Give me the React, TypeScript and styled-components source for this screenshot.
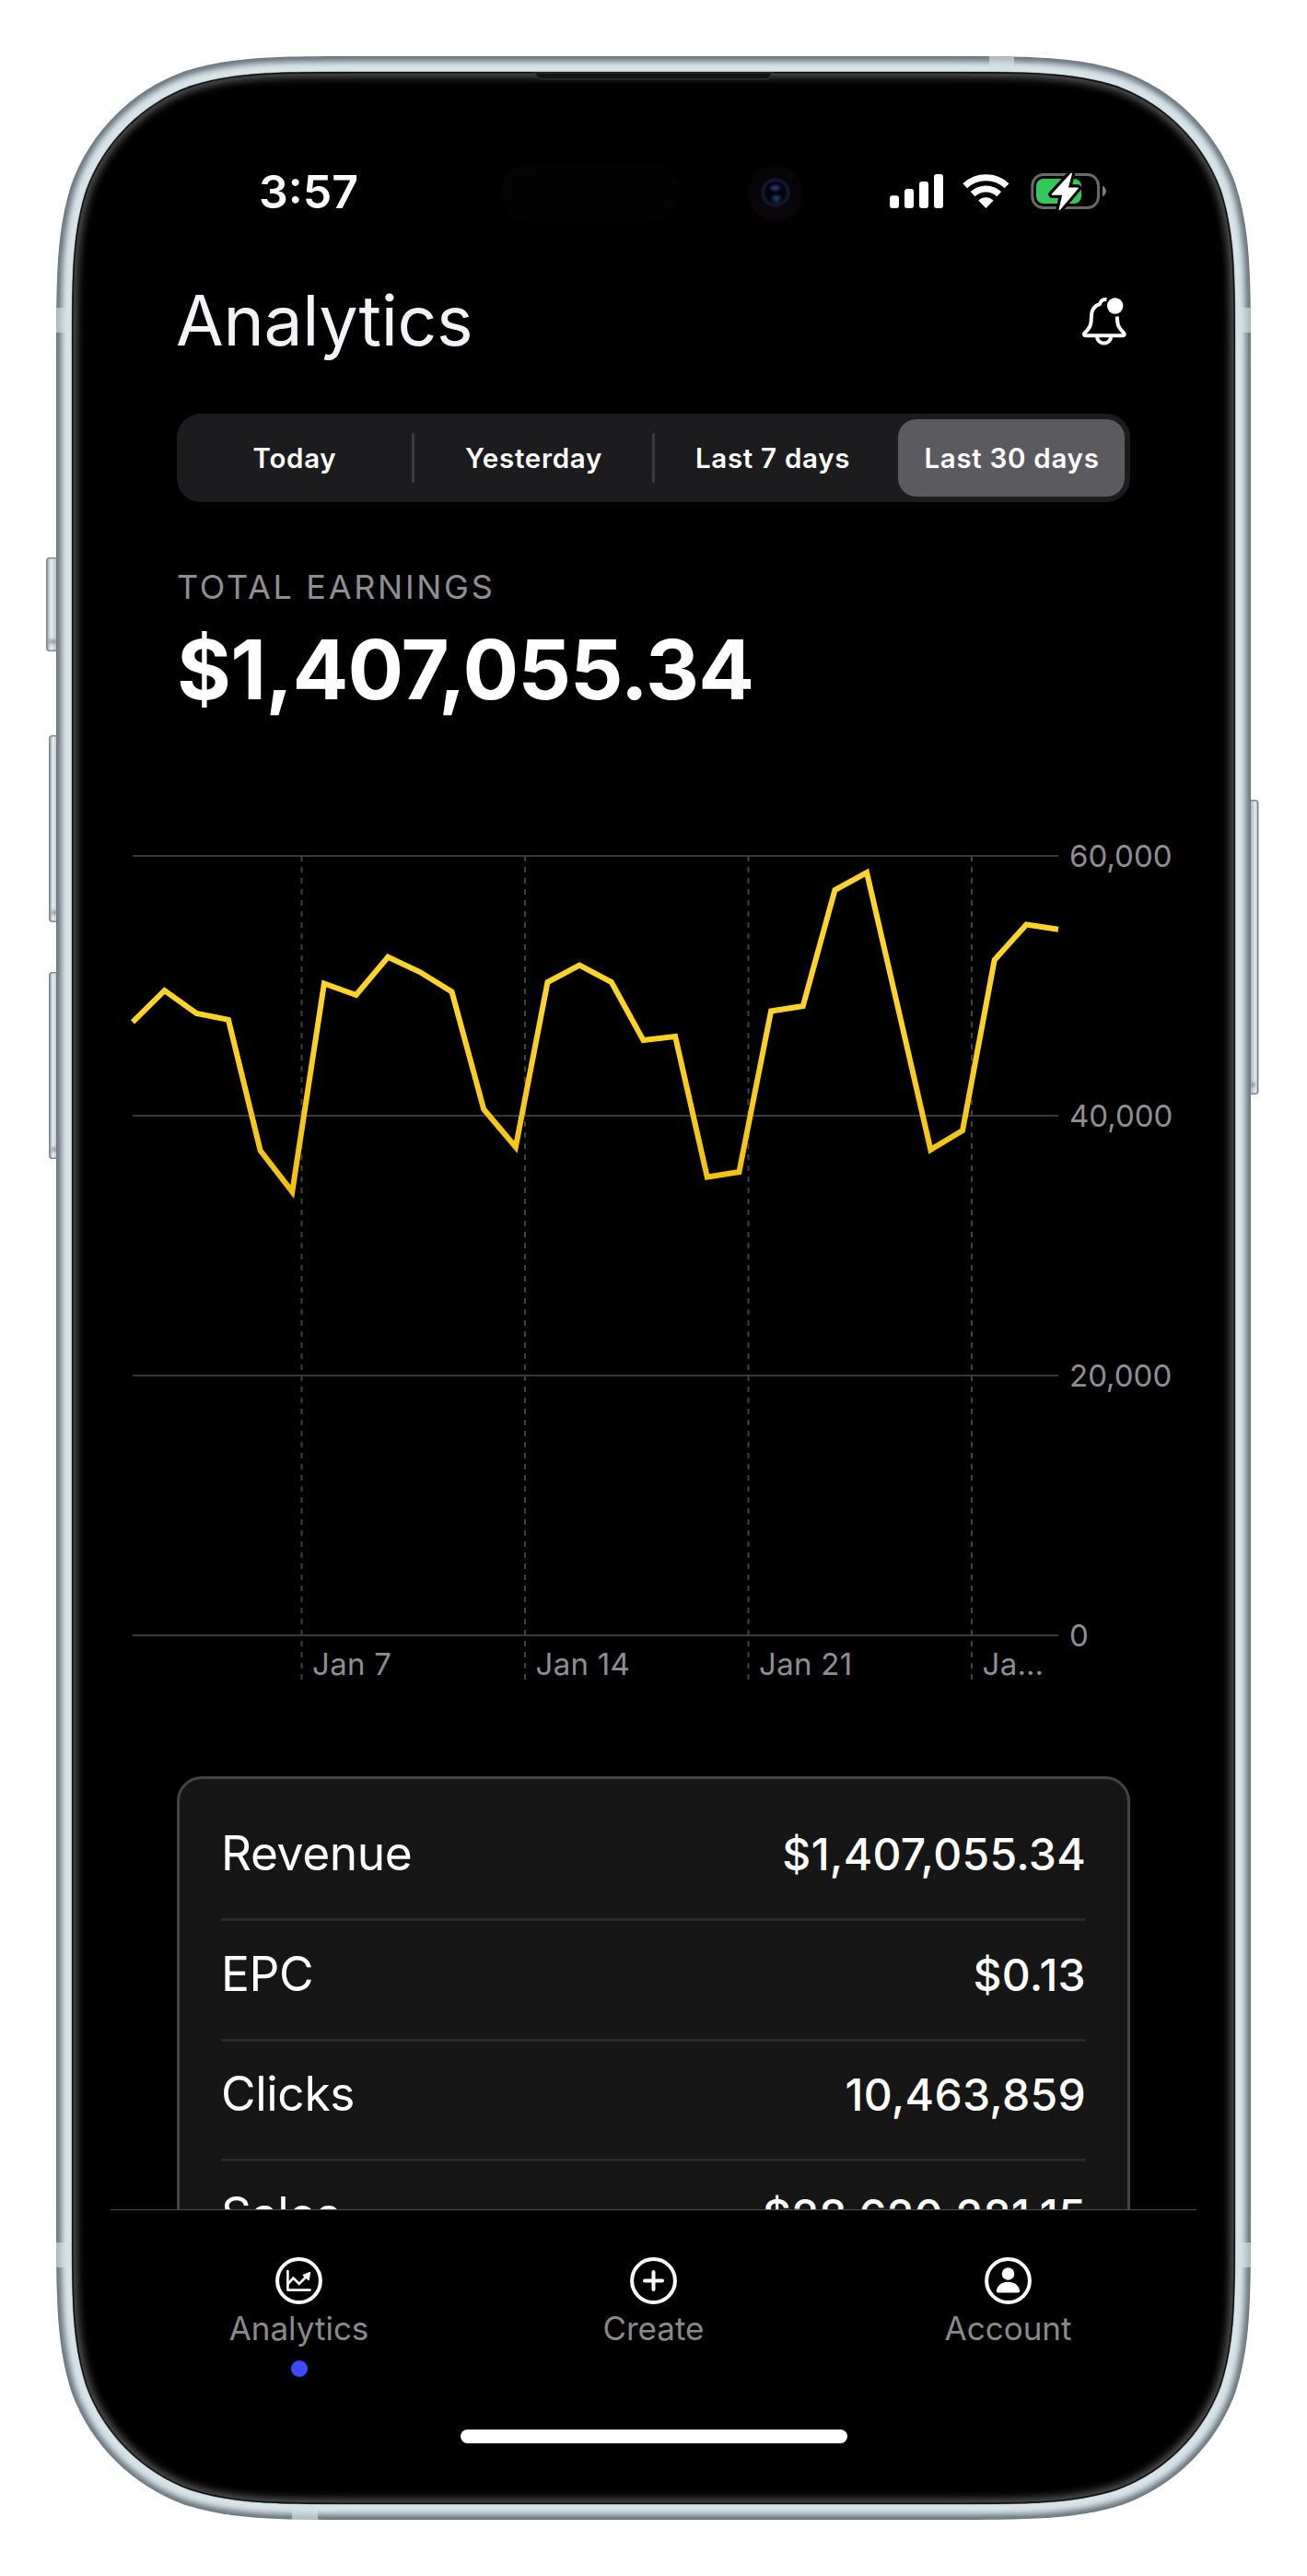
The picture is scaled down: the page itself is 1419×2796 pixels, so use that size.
import React from "react";
import styled, { createGlobalStyle } from "styled-components";

const GlobalStyle = createGlobalStyle`
  body {
    margin: 0;
    background: #ffffff;
    font-family: Inter, "Liberation Sans", sans-serif;
  }
`;

const Page = styled.main`
  position: relative;
  box-sizing: border-box;
  width: 1419px;
  height: 2796px;
  padding: 120px;
`;

const ShellSvg = styled.svg`
  position: absolute;
  top: 0;
  left: 0;
`;

const Screen = styled.div`
  position: relative;
  display: flex;
  flex-direction: column;
  width: 1179px;
  height: 2556px;
  color: #ffffff;
`;

const StatusBar = styled.div`
  display: flex;
  flex: none;
  justify-content: space-between;
  box-sizing: border-box;
  height: 177px;
  padding: 58px 97px 0 161px;
`;

const Time = styled.span`
  font-size: 50px;
  font-weight: 600;
  line-height: 60px;
`;

const StatusIcons = styled.div`
  display: flex;
  gap: 21px;
  margin-top: 9px;
`;

const Scroll = styled.div`
  flex: 1;
  min-height: 0;
  overflow: hidden;
`;

const Header = styled.header`
  display: flex;
  justify-content: space-between;
  align-items: flex-start;
  height: 90px;
  padding: 5px 75px 0 71px;
`;

const Title = styled.h1`
  margin: 1px 0 0;
  color: #f2f2f7;
  font-size: 75px;
  font-weight: 430;
  line-height: 90px;
  letter-spacing: -0.3px;
`;

const BellButton = styled.button`
  display: flex;
  margin: 20px 0 0;
  padding: 0;
  border: 0;
  background: none;
`;

const Segments = styled.div`
  display: flex;
  align-items: center;
  box-sizing: border-box;
  height: 96px;
  margin: 57px 72px 0;
  border-radius: 26px;
  background: #1c1c1e;
`;

const Segment = styled.button<{ $width: number; $active?: boolean }>`
  width: ${(props) => props.$width}px;
  height: 84px;
  margin: 0 0 0 ${(props) => (props.$active ? 9 : 0)}px;
  padding: 0 0 0 1px;
  border: 0;
  border-radius: 20px;
  background: ${(props) => (props.$active ? "#5b5a5f" : "transparent")};
  color: #ffffff;
  font-family: inherit;
  font-size: 29.5px;
  font-weight: 600;
  letter-spacing: 0.7px;
  white-space: nowrap;
`;

const SegmentDivider = styled.span`
  width: 3px;
  height: 54px;
  border-radius: 2px;
  background: #3d3d40;
`;

const Summary = styled.section`
  padding: 70px 72px 0;
`;

const SummaryLabel = styled.div`
  color: #8e8e93;
  font-size: 36px;
  line-height: 44px;
  letter-spacing: 2.7px;
`;

const SummaryValue = styled.div`
  margin: 13px 0 -1px;
  font-size: 90px;
  font-weight: 700;
  line-height: 110px;
  letter-spacing: -0.8px;
`;

const ChartSvg = styled.svg`
  display: block;
  margin-top: 129px;

  text {
    fill: #8e8e93;
    font-size: 33px;
  }
`;

const Card = styled.section`
  box-sizing: border-box;
  margin: 98px 72px 0;
  padding: 23.4px 45px;
  border: 3px solid #444446;
  border-radius: 27px;
  background: #161616;
`;

const StatRow = styled.div`
  display: flex;
  justify-content: space-between;
  align-items: baseline;
  box-sizing: border-box;
  height: 130.6px;
  padding-top: 18.8px;
  border-bottom: 3px solid #2a2a2b;
`;

const StatLabel = styled.span`
  font-size: 51.5px;
  font-weight: 430;
  line-height: 76px;
  letter-spacing: -0.4px;
`;

const StatValue = styled.span`
  font-size: 48px;
  font-weight: 500;
  line-height: 76px;
  letter-spacing: 0.3px;
`;

const TabBar = styled.nav`
  display: flex;
  flex: none;
  flex-direction: column;
  align-items: center;
  box-sizing: border-box;
  height: 278px;
  border-top: 1px solid #4c4c4e;
`;

const Tabs = styled.div`
  display: grid;
  grid-template-columns: repeat(3, 385px);
  padding-top: 51px;
`;

const Tab = styled.a`
  display: flex;
  flex-direction: column;
  align-items: center;
`;

const TabLabel = styled.span`
  margin-top: 5px;
  color: #8a8a8a;
  font-size: 35px;
  line-height: 42px;
`;

const ActiveDot = styled.span`
  width: 18px;
  height: 18px;
  margin-top: 14px;
  border-radius: 50%;
  background: #3d4bff;
`;

const HomeIndicator = styled.div`
  width: 420px;
  height: 15px;
  margin: auto 0 24px;
  border-radius: 8px;
  background: #ffffff;
`;

// Rounded rectangle with the smooth corners of the device body
const smoothRect = (
  x: number,
  y: number,
  w: number,
  h: number,
  r: number
): string => {
  const corner = (
    cx: number,
    cy: number,
    ux: number,
    uy: number,
    vx: number,
    vy: number
  ) => {
    // a runs back along the incoming edge, b runs along the outgoing edge
    const p = (a: number, b: number) =>
      `${cx - ux * a * r + vx * b * r} ${cy - uy * a * r + vy * b * r}`;
    return [
      `L ${p(1.5287, 0)}`,
      `C ${p(1.0885, 0)} ${p(0.8684, 0)} ${p(0.6315, 0.0749)}`,
      `C ${p(0.3728, 0.1691)} ${p(0.1691, 0.3728)} ${p(0.0749, 0.6315)}`,
      `C ${p(0, 0.8684)} ${p(0, 1.0885)} ${p(0, 1.5287)}`,
    ].join(" ");
  };
  return [
    `M ${x + w / 2} ${y}`,
    corner(x + w, y, 1, 0, 0, 1),
    corner(x + w, y + h, 0, 1, -1, 0),
    corner(x, y + h, -1, 0, 0, -1),
    corner(x, y, 0, -1, 1, 0),
    "Z",
  ].join(" ");
};

const body = smoothRect(61, 61, 1297, 2674, 220);
const glass = smoothRect(78, 78, 1263, 2640, 204);

const SideButton = ({
  x,
  y,
  width,
  height,
  flip,
}: {
  x: number;
  y: number;
  width: number;
  height: number;
  flip?: boolean;
}) => (
  <g>
    <rect
      x={x + 0.75}
      y={y + 0.75}
      width={width + 3}
      height={height - 1.5}
      rx={3}
      fill={flip ? "url(#buttonRight)" : "url(#buttonLeft)"}
      stroke="#7f8a90"
      strokeWidth={1.5}
    />
    <rect
      x={x + 3}
      y={y + height - 13}
      width={width - 2}
      height={5}
      fill="#6f7a80"
      opacity={0.6}
      filter="url(#soft)"
    />
  </g>
);

const Shell = () => (
  <ShellSvg width="1419" height="2796" viewBox="0 0 1419 2796">
    <defs>
      <linearGradient id="buttonLeft">
        <stop offset="0" stopColor="#9ba6ac" />
        <stop offset="0.35" stopColor="#e6edf1" />
        <stop offset="1" stopColor="#9eabb1" />
      </linearGradient>
      <linearGradient id="buttonRight">
        <stop offset="0.2" stopColor="#9eabb1" />
        <stop offset="0.75" stopColor="#e6edf1" />
        <stop offset="1" stopColor="#9ba6ac" />
      </linearGradient>
      <linearGradient id="camera" x1="0" y1="0" x2="0" y2="1">
        <stop offset="0" stopColor="#040405" />
        <stop offset="1" stopColor="#0b050b" />
      </linearGradient>
      <filter id="soft" x="-50%" y="-50%" width="200%" height="200%">
        <feGaussianBlur stdDeviation="1.6" />
      </filter>
      <filter
        id="rim"
        filterUnits="userSpaceOnUse"
        x="0"
        y="0"
        width="1419"
        height="2796"
      >
        <feGaussianBlur stdDeviation="3.2" />
      </filter>
      <filter
        id="glow"
        filterUnits="userSpaceOnUse"
        x="0"
        y="0"
        width="1419"
        height="2796"
      >
        <feGaussianBlur stdDeviation="4.5" />
      </filter>
      <clipPath id="bodyClip">
        <path d={body} />
      </clipPath>
      <clipPath id="glassClip">
        <path d={glass} />
      </clipPath>
    </defs>

    <SideButton x={50} y={605} width={11} height={102} />
    <SideButton x={53} y={798} width={8} height={203} />
    <SideButton x={53} y={1055} width={8} height={203} />
    <SideButton x={1354} y={868} width={8} height={320} flip />

    <g clipPath="url(#bodyClip)">
      <path d={body} fill="#d8e3e8" />
      <path
        d={body}
        fill="none"
        stroke="#66727a"
        strokeWidth="11"
        filter="url(#rim)"
      />
      <g fill="#d6e0e1" opacity="0.65">
        <rect x="61" y="334" width="18" height="27" />
        <rect x="1340" y="334" width="18" height="27" />
        <rect x="61" y="2434" width="18" height="27" />
        <rect x="1340" y="2434" width="18" height="27" />
        <rect x="1074" y="61" width="27" height="18" />
        <rect x="317" y="2717" width="28" height="18" />
      </g>
    </g>
    <path d={glass} fill="#000000" stroke="#a3afb5" strokeWidth="1.5" />
    <g clipPath="url(#glassClip)">
      <path
        d={glass}
        fill="none"
        stroke="#565454"
        strokeWidth="11"
        filter="url(#glow)"
      />
      <path d={glass} fill="none" stroke="#101314" strokeWidth="3" />
    </g>

    <path
      d="M579 79 H840 C836 79 837 86 831 86 H588 C582 86 583 79 579 79 Z"
      fill="#131313"
      stroke="#3a3a3a"
      strokeWidth="1"
    />
    <rect x="544" y="176" width="194" height="66" rx="33" fill="#030303" />
    <circle cx="842" cy="209" r="30" fill="url(#camera)" />
    <circle cx="842" cy="209" r="16" fill="#12142a" />
    <circle cx="842" cy="209" r="11.5" fill="#04040f" />
    <ellipse cx="841.5" cy="204" rx="5" ry="3" fill="#36458f" opacity="0.8" filter="url(#soft)" />
    <ellipse cx="843" cy="215" rx="4.5" ry="3" fill="#1b6d7c" opacity="0.6" filter="url(#soft)" />
    <ellipse cx="843" cy="219" rx="3.5" ry="1.5" fill="#5a1f8f" opacity="0.8" filter="url(#soft)" />
  </ShellSvg>
);

const SignalIcon = () => (
  <svg width="58" height="42" viewBox="0 0 58 42" fill="#ffffff">
    <rect x="0" y="25.3" width="10" height="13.7" rx="3" />
    <rect x="16" y="18" width="10" height="21" rx="3" />
    <rect x="32" y="10" width="10" height="29" rx="3" />
    <rect x="48" y="2" width="10" height="37" rx="3" />
  </svg>
);

const WifiIcon = () => (
  <svg width="52" height="42" viewBox="0 0 52 42" fill="none">
    <g stroke="#ffffff" strokeWidth="7">
      <path d="M2.7 14.7 A33.3 33.3 0 0 1 48.1 14.7" />
      <path d="M11.1 23.6 A21 21 0 0 1 39.7 23.6" />
    </g>
    <path d="M25.4 39 L17.2 30.6 A11.7 11.7 0 0 1 33.6 30.6 Z" fill="#ffffff" />
  </svg>
);

const BatteryIcon = () => {
  const bolt = "M45.2 1.5 L24.4 24 H36.2 L32.4 40.2 L52 17.2 H41 Z";
  return (
    <svg width="84" height="42" viewBox="0 0 84 42" fill="none">
      <rect
        x="2.8"
        y="2.5"
        width="71.7"
        height="36"
        rx="12"
        stroke="#69696a"
        strokeWidth="3"
      />
      <path d="M79 14.7 C84.2 17 84.2 24 79 26.3 Z" fill="#7d7d7e" />
      <rect x="7" y="7" width="49" height="27" rx="8" fill="#34c759" />
      <path d={bolt} stroke="#000000" strokeWidth="8" strokeLinejoin="round" />
      <path
        d={bolt}
        fill="#ffffff"
        stroke="#ffffff"
        strokeWidth="1.6"
        strokeLinejoin="round"
      />
    </svg>
  );
};

const BellIcon = () => (
  <svg width="50" height="54" viewBox="0 0 50 54" fill="none">
    <g stroke="#ffffff" strokeWidth="4" strokeLinejoin="round">
      <path d="M27.5 3 C24 2.5 20.8 4.6 20 8 C14.5 9.8 11.4 14 11 20 L10.6 27 C10.3 31.5 9 33.7 6.6 36.3 L3.6 39.3 C2.4 40.8 2.9 42.3 4.8 42.3 H44.8 C46.9 42.3 47.3 40.8 46 39.3 C42 35 40 33 39.5 29 L38.7 21.5" />
      <path d="M17 43 C17 47.2 20.3 50.5 24.6 50.5 S32.2 47.2 32.2 43" />
    </g>
    <circle cx="36.7" cy="10" r="8.7" fill="#ffffff" />
  </svg>
);

const AnalyticsIcon = () => (
  <svg width="51" height="51" viewBox="0 0 51 51" fill="none">
    <circle cx="25.5" cy="25.5" r="23.4" stroke="#ffffff" strokeWidth="4" />
    <g stroke="#ffffff" strokeWidth="2.6" strokeLinecap="round">
      <path d="M13.4 15 V35.6 H37.6" strokeLinejoin="round" />
      <path d="M14.2 28.4 L19.4 22.6 L25.8 28.8 L34 20.5" />
    </g>
    <path
      d="M37.4 16.8 L30.4 19.4 L36 24.4 Z"
      fill="#ffffff"
      stroke="#ffffff"
      strokeWidth="1.6"
      strokeLinejoin="round"
    />
  </svg>
);

const CreateIcon = () => (
  <svg width="51" height="51" viewBox="0 0 51 51" fill="none">
    <g stroke="#ffffff" strokeWidth="4" strokeLinecap="round">
      <circle cx="25.5" cy="25.5" r="23.4" />
      <path d="M25.5 16 V35 M16 25.5 H35" />
    </g>
  </svg>
);

const AccountIcon = () => (
  <svg width="51" height="51" viewBox="0 0 51 51" fill="none">
    <circle cx="25.5" cy="25.5" r="23.4" stroke="#ffffff" strokeWidth="4" />
    <circle cx="25.5" cy="18" r="6.8" fill="#ffffff" />
    <path
      d="M12.8 36.4 C13.6 31 18.5 26.8 25.5 26.8 S37.4 31 38.2 36.4 Q38.4 38.5 36.4 38.5 H14.6 Q12.6 38.5 12.8 36.4 Z"
      fill="#ffffff"
    />
  </svg>
);

const earnings = [
  47210, 49640, 47870, 47390, 37320, 34140, 50180, 49290, 52220, 51060, 49540,
  40500, 37590, 50280, 51590, 50280, 45810, 46100, 35280, 35670, 48050, 48440,
  57370, 58720, 48080, 37380, 38860, 51990, 54720, 54350,
];

const yTicks = [60000, 40000, 20000, 0];

const xTicks = [
  { x: 207.5, label: "Jan 7" },
  { x: 450, label: "Jan 14" },
  { x: 692.5, label: "Jan 21" },
  { x: 935, label: "Ja…" },
];

const plot = { left: 24, right: 1029, top: 19, bottom: 865 };

const scaleX = (i: number) =>
  plot.left + ((plot.right - plot.left) * i) / (earnings.length - 1);
const scaleY = (value: number) =>
  plot.bottom - ((plot.bottom - plot.top) * value) / 60000;

const EarningsChart = () => (
  <ChartSvg width="1179" height="920" viewBox="0 0 1179 920">
    <defs>
      <linearGradient
        id="line"
        gradientUnits="userSpaceOnUse"
        x1="0"
        y1="180"
        x2="0"
        y2="385"
      >
        <stop offset="0" stopColor="#ffd42a" />
        <stop offset="1" stopColor="#f0c10e" />
      </linearGradient>
    </defs>
    {yTicks.map((tick) => (
      <g key={tick}>
        <path
          d={`M${plot.left} ${scaleY(tick)} H${plot.right}`}
          stroke="#39393b"
          strokeWidth="2"
        />
        <text x="1041" y={scaleY(tick) + 12}>
          {tick.toLocaleString("en-US")}
        </text>
      </g>
    ))}
    {xTicks.map(({ x, label }) => (
      <g key={label}>
        <path
          d={`M${x} ${plot.top} V913`}
          stroke="#414143"
          strokeWidth="2"
          strokeDasharray="6 6"
        />
        <text x={x + 11.5} y="908" letterSpacing="0.3">
          {label}
        </text>
      </g>
    ))}
    <polyline
      points={earnings.map((v, i) => `${scaleX(i)},${scaleY(v)}`).join(" ")}
      fill="none"
      stroke="url(#line)"
      strokeWidth="6"
      strokeMiterlimit="10"
    />
  </ChartSvg>
);

const stats = [
  { label: "Revenue", value: "$1,407,055.34" },
  { label: "EPC", value: "$0.13" },
  { label: "Clicks", value: "10,463,859" },
  { label: "Sales", value: "$28,620,281.15" },
];

const App = () => {
  return (
    <Page>
      <GlobalStyle />
      <Shell />
      <Screen>
        <StatusBar>
          <Time>3:57</Time>
          <StatusIcons>
            <SignalIcon />
            <WifiIcon />
            <BatteryIcon />
          </StatusIcons>
        </StatusBar>
        <Scroll>
          <Header>
            <Title>Analytics</Title>
            <BellButton aria-label="Notifications">
              <BellIcon />
            </BellButton>
          </Header>
          <Segments>
            <Segment $width={255}>Today</Segment>
            <SegmentDivider />
            <Segment $width={258}>Yesterday</Segment>
            <SegmentDivider />
            <Segment $width={255}>Last 7 days</Segment>
            <Segment $width={246} $active>
              Last 30 days
            </Segment>
          </Segments>
          <Summary>
            <SummaryLabel>TOTAL EARNINGS</SummaryLabel>
            <SummaryValue>$1,407,055.34</SummaryValue>
          </Summary>
          <EarningsChart />
          <Card>
            {stats.map(({ label, value }) => (
              <StatRow key={label}>
                <StatLabel>{label}</StatLabel>
                <StatValue>{value}</StatValue>
              </StatRow>
            ))}
          </Card>
        </Scroll>
        <TabBar>
          <Tabs>
            <Tab>
              <AnalyticsIcon />
              <TabLabel>Analytics</TabLabel>
              <ActiveDot />
            </Tab>
            <Tab>
              <CreateIcon />
              <TabLabel>Create</TabLabel>
            </Tab>
            <Tab>
              <AccountIcon />
              <TabLabel>Account</TabLabel>
            </Tab>
          </Tabs>
          <HomeIndicator />
        </TabBar>
      </Screen>
    </Page>
  );
};

export default App;
